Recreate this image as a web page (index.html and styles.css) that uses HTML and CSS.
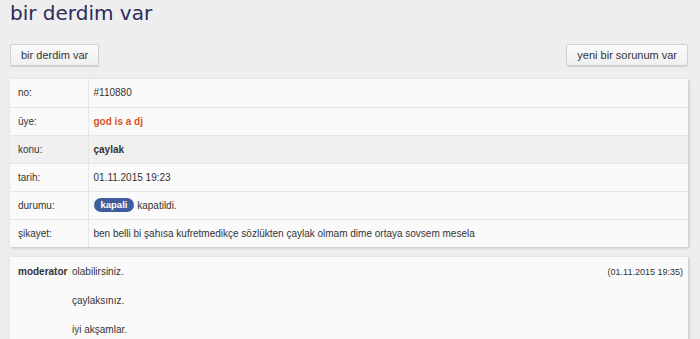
FILE: index.html
```html
<!DOCTYPE html>
<html>
<head lang="tr">
    <meta charset="UTF-8">
    <title>bir derdim var</title>
    <link rel="stylesheet" href="styles.css">
</head>
<body>
<h1 class="page-title">bir derdim var</h1>
<div class="actions">
    <button>bir derdim var</button>
    <button>yeni bir sorunum var</button>
</div>
<table class="ticket">
    <tr>
        <td class="label">no:</td>
        <td>#110880</td>
    </tr>
    <tr>
        <td class="label">üye:</td>
        <td class="user">god is a dj</td>
    </tr>
    <tr class="hl">
        <td class="label">konu:</td>
        <td class="bold">çaylak</td>
    </tr>
    <tr>
        <td class="label">tarih:</td>
        <td>01.11.2015 19:23</td>
    </tr>
    <tr>
        <td class="label">durumu:</td>
        <td><span class="badge">kapali</span> kapatildi.</td>
    </tr>
    <tr>
        <td class="label">şikayet:</td>
        <td>ben belli bi şahısa kufretmedikçe sözlükten çaylak olmam dime ortaya sovsem mesela</td>
    </tr>
</table>
<div class="reply">
    <span class="author">moderator</span>
    <div class="reply-text">
        <p>olabilirsiniz.</p>
        <p>çaylaksınız.</p>
        <p>iyi akşamlar.</p>
    </div>
    <span class="date">(01.11.2015 19:35)</span>
</div>
</body>
</html>
```

FILE: styles.css
```css
* {
    margin: 0;
    padding: 0;
    box-sizing: border-box;
}

body {
    background: #eeeeee;
    padding: 0 12px 0 10px;
    font-family: "Liberation Sans", Arial, sans-serif;
    font-size: 10px;
    color: #333;
}

.page-title {
    font-family: "DejaVu Sans", Verdana, sans-serif;
    font-size: 20px;
    font-weight: normal;
    color: #2b2b5c;
    line-height: 26px;
}

.actions {
    display: flex;
    justify-content: space-between;
    margin-top: 18px;
}

.actions button {
    height: 22px;
    padding: 0 10px;
    font-family: "Liberation Sans", Arial, sans-serif;
    font-size: 11px;
    color: #333;
    background: linear-gradient(#fafafa, #f0f0f0);
    border: 1px solid #d0d0d0;
    border-radius: 2px;
    box-shadow: 0 1px 1px rgba(0, 0, 0, 0.12);
    cursor: pointer;
}

.ticket {
    width: 100%;
    margin-top: 13px;
    border-collapse: collapse;
    background: #fafafa;
    box-shadow: 1px 1px 3px rgba(0, 0, 0, 0.2);
}

.ticket td {
    height: 28px;
    padding: 0 5px;
    border-top: 1px solid #e6e6e6;
    vertical-align: middle;
}

.ticket tr:first-child td {
    border-top: none;
}

.ticket td.label {
    width: 78px;
    padding-left: 8px;
    border-right: 1px solid #e6e6e6;
}

.ticket tr.hl td {
    background: #f0f0f0;
}

.bold {
    font-weight: bold;
}

.user {
    color: #d9541e;
    font-weight: bold;
}

.badge {
    display: inline-block;
    padding: 0 7px;
    line-height: 14px;
    border-radius: 8px;
    background: #3f5d9c;
    color: #fff;
    font-size: 9.5px;
    font-weight: bold;
    vertical-align: 1px;
}

.reply {
    display: flex;
    align-items: flex-start;
    margin-top: 10px;
    padding: 8px 5px 0 8px;
    background: #fafafa;
    box-shadow: 1px 1px 3px rgba(0, 0, 0, 0.2);
    line-height: 14px;
}

.author {
    font-weight: bold;
    width: 54px;
    flex-shrink: 0;
}

.reply-text {
    flex: 1;
}

.reply-text p {
    margin-bottom: 15px;
}

.date {
    font-size: 9px;
}
```
